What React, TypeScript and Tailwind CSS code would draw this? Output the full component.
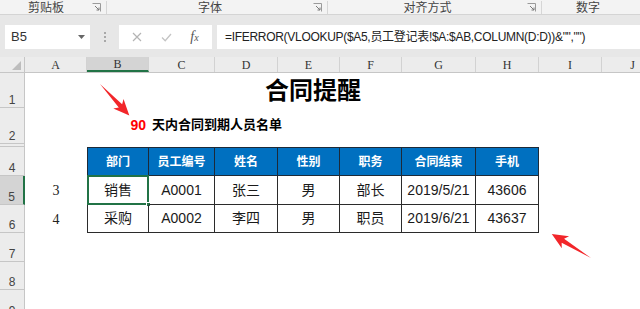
import React from 'react';

const colW = [
  'w-[62px]',
  'w-[62px]',
  'w-[66px]',
  'w-[63px]',
  'w-[62px]',
  'w-[62px]',
  'w-[74px]',
  'w-[63px]',
  'w-[63px]',
  'w-[62px]',
];
const letters = ['A', 'B', 'C', 'D', 'E', 'F', 'G', 'H', 'I', 'J'];

// table lives in columns B..H
const tableW = colW.slice(1, 8);
const headers = ['部门', '员工编号', '姓名', '性别', '职务', '合同结束', '手机'];
const rows = [
  { n: '3', cells: ['销售', 'A0001', '张三', '男', '部长', '2019/5/21', '43606'] },
  { n: '4', cells: ['采购', 'A0002', '李四', '男', '职员', '2019/6/21', '43637'] },
];

const sans = "font-['Liberation_Sans','Noto_Sans_CJK_SC',sans-serif]";

function Launcher() {
  return (
    <svg width="9" height="9" viewBox="0 0 9 9" className="shrink-0">
      <path d="M0.5 0.5h8v8" fill="none" stroke="#9a9a9a" />
      <path d="M3 3l4 4M7 4.5V7H4.5" fill="none" stroke="#7a7a7a" />
    </svg>
  );
}

function RibbonGroup({ label, w, launcher = true }: { label: string; w: string; launcher?: boolean }) {
  return (
    <div className={`${w} shrink-0 flex items-center border-r border-[#d6d6d6] pr-[5px]`}>
      <span className="flex-1 text-center">{label}</span>
      {launcher && <Launcher />}
    </div>
  );
}

function RowHead({ n, h, active = false }: { n?: string; h: string; active?: boolean }) {
  return (
    <div
      className={`${h} w-[25px] shrink-0 flex items-end justify-center pb-[1px] text-[12px] leading-none text-[#444] border-b border-[#c6c6c6] ${
        active ? 'bg-[#d4d4d4] border-r-2 border-r-[#217346]' : 'bg-[#ececec] border-r border-r-[#c6c6c6]'
      }`}
    >
      {n}
    </div>
  );
}

function Arrow({ x, y, angle, len }: { x: number; y: number; angle: number; len: number }) {
  const L = len;
  const pts = `0,0 ${L - 13},-2.3 ${L - 16},-7 ${L},0 ${L - 16},7 ${L - 13},2.3`;
  return <polygon points={pts} fill="#f2262a" transform={`translate(${x} ${y}) rotate(${angle})`} />;
}

export default function App() {
  return (
    <div className={`relative w-[640px] h-[309px] overflow-hidden bg-white ${sans}`}>
      {/* ribbon group captions */}
      <div className="flex h-[15px] bg-[#f3f3f3] border-b border-[#d4d4d4] text-[12px] leading-none text-[#444] pt-[1px]">
        <RibbonGroup label="剪贴板" w="w-[107px]" />
        <RibbonGroup label="字体" w="w-[221px]" />
        <RibbonGroup label="对齐方式" w="w-[214px]" />
        <div className="flex-1 flex items-center justify-center pr-[6px]">数字</div>
      </div>

      {/* name box + formula bar */}
      <div className="flex h-[42px] bg-[#e7e7e7] pt-[10px] pb-[8px]">
        <div className="ml-[5px] w-[85px] bg-white flex items-center pl-[6px] pr-[5px] text-[13px] text-[#333]">
          <span className="flex-1">B5</span>
          <svg width="7" height="4" viewBox="0 0 7 4">
            <path d="M0 0h7L3.5 4z" fill="#666" />
          </svg>
        </div>
        <div className="w-[29px] flex flex-col items-center justify-center gap-[2px]">
          <span className="w-[2px] h-[2px] bg-[#a8a8a8]" />
          <span className="w-[2px] h-[2px] bg-[#a8a8a8]" />
          <span className="w-[2px] h-[2px] bg-[#a8a8a8]" />
        </div>
        <div className="w-[93px] bg-white flex items-center justify-around px-[4px]">
          <svg width="10" height="10" viewBox="0 0 10 10">
            <path d="M1 1l8 8M9 1L1 9" stroke="#b4b4b4" strokeWidth="1.2" />
          </svg>
          <svg width="11" height="9" viewBox="0 0 11 9">
            <path d="M1 4.5l3.2 3.2L10 1" fill="none" stroke="#c4c4c4" strokeWidth="1.3" />
          </svg>
          <span className="font-['Liberation_Serif',serif] italic text-[14px] text-[#555] leading-none">
            f<span className="text-[10px]">x</span>
          </span>
        </div>
        <div className="ml-[5px] flex-1 bg-white flex items-center pl-[8px] text-[12px] tracking-[-0.3px] text-[#222] whitespace-nowrap">
          =IFERROR(VLOOKUP($A5,员工登记表!$A:$AB,COLUMN(D:D))&amp;"","")
        </div>
      </div>

      {/* column headers */}
      <div className="flex h-[16px] bg-[#ececec] border-b border-[#c6c6c6]">
        <div className="w-[25px] shrink-0 border-r border-[#c6c6c6] flex items-end justify-end pr-[3px] pb-[2px]">
          <svg width="9" height="9" viewBox="0 0 9 9">
            <path d="M9 0v9H0z" fill="#bdbdbd" />
          </svg>
        </div>
        {letters.map((l, i) => (
          <div
            key={l}
            className={`${colW[i]} shrink-0 flex items-center justify-center border-r border-r-[#d2d2d2] font-['Liberation_Serif',serif] text-[12px] text-[#333] ${
              l === 'B' ? 'bg-[#d4d4d4] border-b-2 border-b-[#217346]' : ''
            }`}
          >
            {l}
          </div>
        ))}
      </div>

      {/* row 1: title */}
      <div className="flex">
        <RowHead n="1" h="h-[35px]" />
        <div className="w-[62px] shrink-0" />
        <div className="w-[452px] shrink-0 flex items-center justify-center text-[24px] font-bold text-black leading-none">
          合同提醒
        </div>
      </div>

      {/* row 2: subtitle */}
      <div className="flex">
        <RowHead n="2" h="h-[36px]" />
        <div className="w-[62px] shrink-0" />
        <div className="w-[62px] shrink-0 flex items-center justify-end pr-[3px] pb-[2px] text-[14px] font-bold text-[#ff0000]">
          90
        </div>
        <div className="flex-1 flex items-center pl-[3px] pb-[2px] text-[13px] font-bold text-black whitespace-nowrap">
          天内合同到期人员名单
        </div>
      </div>

      {/* hidden row 3 */}
      <div className="flex">
        <RowHead h="h-[3px]" />
      </div>

      {/* row 4: table header */}
      <div className="flex">
        <RowHead n="4" h="h-[29px]" />
        <div className="w-[62px] shrink-0" />
        {headers.map((t, i) => (
          <div
            key={t}
            className={`${tableW[i]} shrink-0 flex items-center justify-center bg-[#0070c0] text-white text-[12px] font-bold border-t border-b border-r border-[#1d2a38] ${
              i === 0 ? 'border-l' : ''
            }`}
          >
            {t}
          </div>
        ))}
      </div>

      {/* rows 5, 6: data */}
      {rows.map((r, ri) => (
        <div className="flex" key={r.n}>
          <RowHead n={ri === 0 ? '5' : '6'} h={ri === 0 ? 'h-[29px]' : 'h-[28px]'} active={ri === 0} />
          <div className="w-[62px] shrink-0 flex items-center justify-center font-['Liberation_Serif',serif] text-[14px] text-[#222]">
            {r.n}
          </div>
          {r.cells.map((c, i) => (
            <div
              key={i}
              className={`${tableW[i]} relative shrink-0 flex items-center justify-center text-[14px] text-[#1a1a1a] border-b border-r border-[#2b2b2b] ${
                i === 0 ? 'border-l' : ''
              }`}
            >
              {c}
              {ri === 0 && i === 0 && (
                <>
                  <div className="absolute left-[-1px] top-[-1px] right-[-1px] bottom-[-1px] border-2 border-[#217346]" />
                  <div className="absolute right-[-3px] bottom-[-3px] w-[5px] h-[5px] bg-[#217346] border border-white" />
                </>
              )}
            </div>
          ))}
        </div>
      ))}

      {/* rows 7-9 */}
      <div className="flex">
        <RowHead n="7" h="h-[29px]" />
      </div>
      <div className="flex">
        <RowHead n="8" h="h-[28px]" />
      </div>
      <div className="flex">
        <RowHead n="9" h="h-[29px]" />
      </div>

      {/* red annotation arrows */}
      <svg className="absolute inset-0 pointer-events-none" width="640" height="309">
        <Arrow x={100} y={84} angle={47} len={43} />
        <Arrow x={591} y={258} angle={211.5} len={46} />
      </svg>
    </div>
  );
}
